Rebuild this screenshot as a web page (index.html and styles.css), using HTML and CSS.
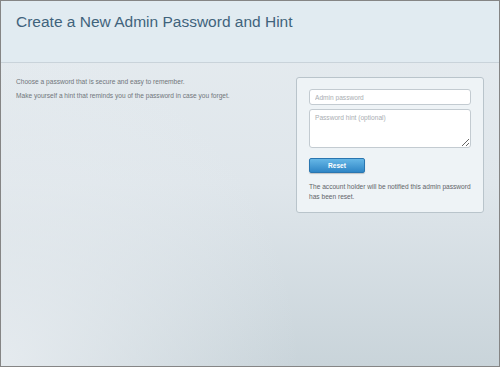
FILE: index.html
```html
<!DOCTYPE html>
<html lang="en">
<head>
  <meta charset="UTF-8">
  <title>Admin Password</title>
  <link rel="stylesheet" href="styles.css">
</head>
<body>
  <div class="frame">
    <header class="page-head">
      <h1>Create a New Admin Password and Hint</h1>
    </header>

    <main class="content">
      <div class="intro">
        <p>Choose a password that is secure and easy to remember.</p>
        <p>Make yourself a hint that reminds you of the password in case you forget.</p>
      </div>

      <div class="panel">
        <input type="password" class="field" placeholder="Admin password">
        <textarea class="field hint" placeholder="Password hint (optional)"></textarea>
        <button class="reset-btn">Reset</button>
        <p class="note">The account holder will be notified this admin password has been reset.</p>
      </div>
    </main>
  </div>
</body>
</html>
```

FILE: styles.css
```css
/* Reset */
* {
  margin: 0;
  padding: 0;
  box-sizing: border-box;
}

body {
  font-family: "Liberation Sans", Arial, sans-serif;
  width: 500px;
  height: 367px;
  overflow: hidden;
}

.frame {
  width: 500px;
  height: 367px;
  border: 1px solid #858585;
  display: flex;
  flex-direction: column;
  background:
    radial-gradient(ellipse 60% 90% at 0% 100%, rgba(232, 237, 241, 0.9), rgba(232, 237, 241, 0) 100%),
    linear-gradient(180deg, #e6ecf0 0%, #dfe6eb 50%, #c9d4da 100%);
}

/* Header */
.page-head {
  height: 62px;
  background: #e1ebf1;
  border-bottom: 1px solid #c9d3da;
  padding: 12px 0 0 15px;
}

.page-head h1 {
  font-size: 15.5px;
  font-weight: normal;
  color: #3f637c;
}

/* Content */
.content {
  flex: 1;
  display: flex;
  justify-content: space-between;
  padding: 12px 15px 0 15px;
}

.intro p {
  font-size: 6.6px;
  color: #70767b;
  line-height: 14px;
}

/* Panel */
.panel {
  width: 188px;
  height: 136px;
  margin-top: 2px;
  border: 1px solid #b9c4cb;
  border-radius: 3px;
  background: #eef3f6;
  padding: 11px 12px 0 12px;
  display: flex;
  flex-direction: column;
}

.field {
  width: 162px;
  border: 1px solid #c3cbd1;
  border-radius: 3px;
  background: #fff;
  font-family: "Liberation Sans", Arial, sans-serif;
  font-size: 6.6px;
  color: #555;
  padding: 0 5px;
}

.field::placeholder {
  color: #a9aeb2;
}

input.field {
  height: 16px;
}

.hint {
  height: 39px;
  margin-top: 4px;
  padding-top: 4px;
  resize: vertical;
}

.reset-btn {
  width: 56px;
  height: 15px;
  margin-top: 10px;
  border: 1px solid #2a76b0;
  border-radius: 2px;
  background: linear-gradient(#66b7e6, #2f86c6);
  color: #fff;
  font-family: "Liberation Sans", Arial, sans-serif;
  font-size: 6.6px;
  font-weight: bold;
  box-shadow: 0 1px 1px rgba(0, 0, 0, 0.2);
}

.note {
  margin-top: 9px;
  font-size: 6.6px;
  line-height: 10px;
  color: #5f6469;
}
```
